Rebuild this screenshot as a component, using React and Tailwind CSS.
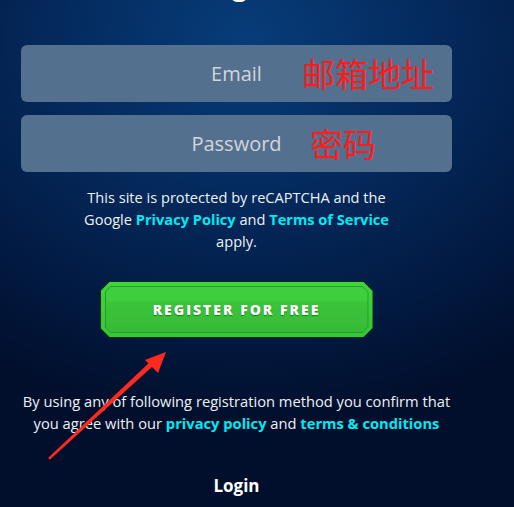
import React from 'react';

const font = { fontFamily: '"Open Sans", "Noto Sans", sans-serif' };

function Field({ label, note, noteLeft }) {
    return (
        <div className="relative w-full h-[57px] rounded-[6px] bg-[#54708f] flex items-center justify-center">
            <span className="text-[20px] text-[#d2d6dc]">{label}</span>
            <span
                className={`absolute top-[8px] ${noteLeft} text-[33px] leading-[40px] text-[#ff1c1c]`}
                style={{ fontFamily: '"Noto Sans CJK SC", sans-serif' }}
            >
                {note}
            </span>
        </div>
    );
}

function RegisterButton() {
    return (
        <div className="w-[274px] h-[57px] p-[1px] bg-[#0b2a1e] [clip-path:polygon(10px_0,calc(100%-10px)_0,100%_10px,100%_calc(100%-10px),calc(100%-10px)_100%,10px_100%,0_calc(100%-10px),0_10px)]">
            <div className="w-full h-full p-[4px] bg-gradient-to-b from-[#3fd43c] to-[#36c735] [clip-path:polygon(9px_0,calc(100%-9px)_0,100%_9px,100%_calc(100%-9px),calc(100%-9px)_100%,9px_100%,0_calc(100%-9px),0_9px)]">
                <div className="w-full h-full p-[1px] bg-[#2a9b2b] [clip-path:polygon(6px_0,calc(100%-6px)_0,100%_6px,100%_calc(100%-6px),calc(100%-6px)_100%,6px_100%,0_calc(100%-6px),0_6px)]">
                    <div className="w-full h-full flex items-center justify-center bg-[linear-gradient(to_bottom,#3fcf3e_0%,#3fcf3e_30%,#3bc43b_34%,#37bb37_100%)] [clip-path:polygon(5px_0,calc(100%-5px)_0,100%_5px,100%_calc(100%-5px),calc(100%-5px)_100%,5px_100%,0_calc(100%-5px),0_5px)]">
                        <span className="text-[14px] font-extrabold tracking-[2px] text-white [text-shadow:0_1px_1px_rgba(0,60,0,0.5)]">
                            REGISTER FOR FREE
                        </span>
                    </div>
                </div>
            </div>
        </div>
    );
}

export default function App() {
    return (
        <div
            className="relative w-[514px] h-[507px] overflow-hidden bg-[radial-gradient(ellipse_90%_75%_at_48%_8%,#073d7a_0%,#04285a_45%,#021a42_75%,#010f2c_100%)]"
            style={font}
        >
            <div className="w-[473px] px-[21px] flex flex-col items-center">
                <h1 className="mt-[-32px] h-[32px] text-[28px] leading-[32px] font-bold text-white">Login</h1>

                <div className="mt-[45px] w-full flex flex-col gap-[13px]">
                    <Field label="Email" note="邮箱地址" noteLeft="left-[281px]" />
                    <Field label="Password" note="密码" noteLeft="left-[289px]" />
                </div>

                <p className="mt-[14px] text-center text-[14.6px] leading-[22px] text-[#eef1f6] whitespace-nowrap">
                    This site is protected by reCAPTCHA and the
                    <br />
                    Google <span className="font-bold text-[#00eaf2]">Privacy Policy</span> and{' '}
                    <span className="font-bold text-[#00eaf2]">Terms of Service</span>
                    <br />
                    apply.
                </p>

                <div className="mt-[29px]">
                    <RegisterButton />
                </div>

                <p className="mt-[52px] text-center text-[14.7px] leading-[22px] text-[#eef1f6] whitespace-nowrap">
                    By using any of following registration method you confirm that
                    <br />
                    you agree with our <span className="font-bold text-[#00eaf2]">privacy policy</span> and{' '}
                    <span className="font-bold text-[#00eaf2]">terms &amp; conditions</span>
                </p>

                <div className="mt-[41px] text-[17px] leading-[22px] font-bold text-white">Login</div>
            </div>

            <svg className="absolute left-0 top-0 pointer-events-none" width="514" height="507">
                <path d="M48 458 L50 459.5 L153 366 L150 362 Z" fill="#ff2a1f" />
                <polygon points="166,352 145,360 158,373" fill="#ff2a1f" />
            </svg>
        </div>
    );
}
